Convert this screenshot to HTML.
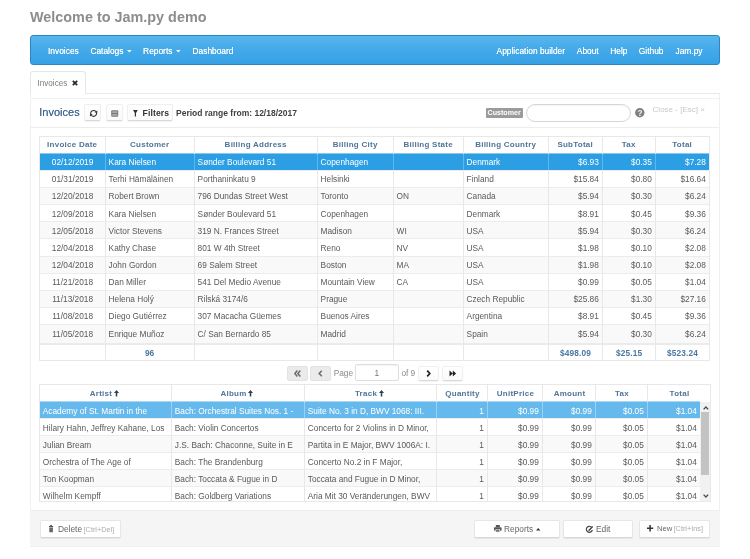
<!DOCTYPE html><html><head><meta charset="utf-8"><style>
html,body{margin:0;padding:0;background:#fff;width:750px;height:559px;overflow:hidden;position:relative;font-family:"Liberation Sans",sans-serif;}
.t{position:absolute;white-space:nowrap;}
.r{position:absolute;box-sizing:border-box;}
svg{position:absolute;overflow:visible;}
#root{position:absolute;left:0;top:0;width:750px;height:559px;filter:blur(0.3px);}
</style></head><body><div id="root">
<div class="t" style="left:30.00px;top:10.21px;font-size:14.4px;line-height:14.4px;color:#8d8d8d;font-weight:bold;">Welcome to Jam.py demo</div>
<div class="r" style="left:30.00px;top:35.00px;width:690.00px;height:30.00px;border:1px solid #2b86c3;border-radius:3px;background:linear-gradient(#58b6ed,#45aaea 45%,#35a1e5);"></div>
<div class="t" style="left:48.00px;top:46.69px;font-size:8.4px;line-height:8.4px;color:#fff;text-shadow:0 0 0.5px rgba(255,255,255,.8);">Invoices</div>
<div class="t" style="left:90.40px;top:46.69px;font-size:8.4px;line-height:8.4px;color:#fff;text-shadow:0 0 0.5px rgba(255,255,255,.8);">Catalogs</div>
<div class="t" style="left:143.10px;top:46.69px;font-size:8.4px;line-height:8.4px;color:#fff;text-shadow:0 0 0.5px rgba(255,255,255,.8);">Reports</div>
<div class="t" style="left:192.50px;top:46.69px;font-size:8.4px;line-height:8.4px;color:#fff;text-shadow:0 0 0.5px rgba(255,255,255,.8);">Dashboard</div>
<div class="t" style="left:496.60px;top:46.69px;font-size:8.4px;line-height:8.4px;color:#fff;text-shadow:0 0 0.5px rgba(255,255,255,.8);">Application builder</div>
<div class="t" style="left:576.80px;top:46.69px;font-size:8.4px;line-height:8.4px;color:#fff;text-shadow:0 0 0.5px rgba(255,255,255,.8);">About</div>
<div class="t" style="left:610.20px;top:46.69px;font-size:8.4px;line-height:8.4px;color:#fff;text-shadow:0 0 0.5px rgba(255,255,255,.8);">Help</div>
<div class="t" style="left:638.80px;top:46.69px;font-size:8.4px;line-height:8.4px;color:#fff;text-shadow:0 0 0.5px rgba(255,255,255,.8);">Github</div>
<div class="t" style="left:675.50px;top:46.69px;font-size:8.4px;line-height:8.4px;color:#fff;text-shadow:0 0 0.5px rgba(255,255,255,.8);">Jam.py</div>
<svg style="left:126.80px;top:49.60px" width="5" height="3" viewBox="0 0 5 3"><path d="M0 0 L4.6 0 L2.3 2.6 Z" fill="#f4f9fd"/></svg>
<svg style="left:176.20px;top:49.60px" width="5" height="3" viewBox="0 0 5 3"><path d="M0 0 L4.6 0 L2.3 2.6 Z" fill="#f4f9fd"/></svg>
<div class="r" style="left:30.00px;top:70.80px;width:56.00px;height:23.70px;border:1px solid #e6e6e6;border-bottom:none;border-radius:3px 3px 0 0;background:#fff;"></div>
<div class="r" style="left:86.00px;top:93.00px;width:634.00px;height:1.00px;background:#e9e9e9;"></div>
<div class="t" style="left:37.40px;top:79.86px;font-size:8.2px;line-height:8.2px;color:#7d7d7d;">Invoices</div>
<svg style="left:71.60px;top:79.80px" width="6" height="6" viewBox="0 0 6 6"><path d="M0.8 0.8 L5.2 5.2 M5.2 0.8 L0.8 5.2" stroke="#262626" stroke-width="1.7"/></svg>
<div class="r" style="left:30.00px;top:94.00px;width:1.00px;height:416.00px;background:#f0f0f0;"></div>
<div class="r" style="left:719.00px;top:94.00px;width:1.00px;height:416.00px;background:#f0f0f0;"></div>
<div class="r" style="left:31.00px;top:98.00px;width:688.00px;height:1.00px;background:#f2f2f2;"></div>
<div class="r" style="left:31.00px;top:127.00px;width:688.00px;height:1.00px;background:#ededed;"></div>
<div class="t" style="left:39.30px;top:107.49px;font-size:11px;line-height:11px;color:#3b6290;text-shadow:0 0 0.4px rgba(59,98,144,.7);">Invoices</div>
<div class="r" style="left:84.40px;top:104.20px;width:17.00px;height:17.20px;border:1px solid #efefef;border-bottom-color:#d9d9d9;border-radius:2px;background:linear-gradient(#fff,#fafafa);box-shadow:0 1px 1px rgba(0,0,0,.05);"></div>
<div class="r" style="left:105.50px;top:104.20px;width:17.00px;height:17.20px;border:1px solid #efefef;border-bottom-color:#d9d9d9;border-radius:2px;background:linear-gradient(#fff,#fafafa);box-shadow:0 1px 1px rgba(0,0,0,.05);"></div>
<div class="r" style="left:126.60px;top:104.20px;width:46.30px;height:17.20px;border:1px solid #efefef;border-bottom-color:#d9d9d9;border-radius:2px;background:linear-gradient(#fff,#fafafa);box-shadow:0 1px 1px rgba(0,0,0,.05);"></div>
<svg style="left:89.50px;top:109.60px" width="8" height="7" viewBox="0 0 8 7"><path d="M0.65 3.9 A3.0 2.9 0 0 1 5.9 1.55" fill="none" stroke="#333" stroke-width="1.1"/><path d="M6.55 2.9 A3.0 2.9 0 0 1 1.3 5.25" fill="none" stroke="#333" stroke-width="1.1"/><path d="M7.4 0.4 L7.2 3.3 L4.6 2.3 Z" fill="#333"/><path d="M-0.1 6.5 L0.1 3.6 L2.7 4.6 Z" fill="#333"/></svg>
<svg style="left:110.90px;top:110.10px" width="8" height="7" viewBox="0 0 8 7"><rect x="0.2" y="0.2" width="7" height="6.6" rx="1.1" fill="#7a7a7a"/><rect x="1.2" y="1.2" width="5" height="1.8" fill="#a9a9a9"/><rect x="1.2" y="4.0" width="5" height="1.8" fill="#a9a9a9"/></svg>
<svg style="left:133.00px;top:109.90px" width="6" height="7" viewBox="0 0 6 7"><path d="M0 0 L4.8 0 L3.0 3.0 L3.0 6.5 L1.8 6.5 L1.8 3.0 Z" fill="#333"/></svg>
<div class="t" style="left:142.60px;top:109.02px;font-size:8.6px;line-height:8.6px;color:#333;font-weight:bold;letter-spacing:0.1px;">Filters</div>
<div class="t" style="left:176.00px;top:108.80px;font-size:8.5px;line-height:8.5px;color:#404040;font-weight:bold;">Period range from: 12/18/2017</div>
<div class="r" style="left:485.80px;top:108.00px;width:37.50px;height:10.00px;background:#9b9b9b;border-radius:1px;"></div>
<div class="t" style="left:487.60px;top:110.49px;font-size:7.1px;line-height:7.1px;color:#fff;font-weight:bold;">Customer</div>
<div class="r" style="left:526.00px;top:104.20px;width:105.30px;height:17.80px;border:1px solid #d6d6d6;border-radius:9px;background:#fff;box-shadow:inset 0 1px 1px rgba(0,0,0,.04);"></div>
<svg style="left:634.60px;top:107.90px" width="10" height="10" viewBox="0 0 10 10"><circle cx="4.8" cy="4.8" r="4.7" fill="#808080"/><text x="4.9" y="7.9" font-family="Liberation Sans" font-weight="bold" font-size="8.2" fill="#f2f2f2" text-anchor="middle">?</text></svg>
<div class="t" style="left:652.60px;top:105.63px;font-size:8.0px;line-height:8.0px;color:#c8c8c8;">Close - [Esc] ×</div>
<div class="r" style="left:39.00px;top:136.00px;width:671.00px;height:225.00px;border:1px solid #e8e8e8;"></div>
<div class="r" style="left:40.00px;top:153.00px;width:669.00px;height:17.00px;background:#2c9fe4;border-top:1px solid #8cc6ea;"></div>
<div class="r" style="left:40.00px;top:188.00px;width:669.00px;height:16.00px;background:#f9f9f9;"></div>
<div class="r" style="left:40.00px;top:222.00px;width:669.00px;height:16.00px;background:#f9f9f9;"></div>
<div class="r" style="left:40.00px;top:257.00px;width:669.00px;height:16.00px;background:#f9f9f9;"></div>
<div class="r" style="left:40.00px;top:291.00px;width:669.00px;height:16.00px;background:#f9f9f9;"></div>
<div class="r" style="left:40.00px;top:325.00px;width:669.00px;height:18.00px;background:#f9f9f9;"></div>
<div class="r" style="left:40.00px;top:170.00px;width:669.00px;height:1.00px;background:#ececec;"></div>
<div class="r" style="left:40.00px;top:187.00px;width:669.00px;height:1.00px;background:#ececec;"></div>
<div class="r" style="left:40.00px;top:204.00px;width:669.00px;height:1.00px;background:#ececec;"></div>
<div class="r" style="left:40.00px;top:221.00px;width:669.00px;height:1.00px;background:#ececec;"></div>
<div class="r" style="left:40.00px;top:238.00px;width:669.00px;height:1.00px;background:#ececec;"></div>
<div class="r" style="left:40.00px;top:256.00px;width:669.00px;height:1.00px;background:#ececec;"></div>
<div class="r" style="left:40.00px;top:273.00px;width:669.00px;height:1.00px;background:#ececec;"></div>
<div class="r" style="left:40.00px;top:290.00px;width:669.00px;height:1.00px;background:#ececec;"></div>
<div class="r" style="left:40.00px;top:307.00px;width:669.00px;height:1.00px;background:#ececec;"></div>
<div class="r" style="left:40.00px;top:324.00px;width:669.00px;height:1.00px;background:#ececec;"></div>
<div class="r" style="left:40.00px;top:343.00px;width:669.00px;height:2.00px;background:#ebebeb;"></div>
<div class="r" style="left:105.00px;top:136.00px;width:1.00px;height:224.00px;background:#e8e8e8;"></div>
<div class="r" style="left:105.00px;top:154.00px;width:1.00px;height:16.00px;background:#5cb9ef;"></div>
<div class="r" style="left:194.00px;top:136.00px;width:1.00px;height:224.00px;background:#e8e8e8;"></div>
<div class="r" style="left:194.00px;top:154.00px;width:1.00px;height:16.00px;background:#5cb9ef;"></div>
<div class="r" style="left:317.00px;top:136.00px;width:1.00px;height:224.00px;background:#e8e8e8;"></div>
<div class="r" style="left:317.00px;top:154.00px;width:1.00px;height:16.00px;background:#5cb9ef;"></div>
<div class="r" style="left:393.00px;top:136.00px;width:1.00px;height:224.00px;background:#e8e8e8;"></div>
<div class="r" style="left:393.00px;top:154.00px;width:1.00px;height:16.00px;background:#5cb9ef;"></div>
<div class="r" style="left:463.00px;top:136.00px;width:1.00px;height:224.00px;background:#e8e8e8;"></div>
<div class="r" style="left:463.00px;top:154.00px;width:1.00px;height:16.00px;background:#5cb9ef;"></div>
<div class="r" style="left:548.00px;top:136.00px;width:1.00px;height:224.00px;background:#e8e8e8;"></div>
<div class="r" style="left:548.00px;top:154.00px;width:1.00px;height:16.00px;background:#5cb9ef;"></div>
<div class="r" style="left:602.00px;top:136.00px;width:1.00px;height:224.00px;background:#e8e8e8;"></div>
<div class="r" style="left:602.00px;top:154.00px;width:1.00px;height:16.00px;background:#5cb9ef;"></div>
<div class="r" style="left:655.00px;top:136.00px;width:1.00px;height:224.00px;background:#e8e8e8;"></div>
<div class="r" style="left:655.00px;top:154.00px;width:1.00px;height:16.00px;background:#5cb9ef;"></div>
<div class="t" style="left:39.20px;top:141.43px;font-size:8.0px;line-height:8.0px;color:#4f7599;font-weight:bold;width:66.00px;text-align:center;letter-spacing:0.25px;">Invoice Date</div>
<div class="t" style="left:105.20px;top:141.43px;font-size:8.0px;line-height:8.0px;color:#4f7599;font-weight:bold;width:89.00px;text-align:center;letter-spacing:0.25px;">Customer</div>
<div class="t" style="left:194.20px;top:141.43px;font-size:8.0px;line-height:8.0px;color:#4f7599;font-weight:bold;width:123.00px;text-align:center;letter-spacing:0.25px;">Billing Address</div>
<div class="t" style="left:317.20px;top:141.43px;font-size:8.0px;line-height:8.0px;color:#4f7599;font-weight:bold;width:76.00px;text-align:center;letter-spacing:0.25px;">Billing City</div>
<div class="t" style="left:393.20px;top:141.43px;font-size:8.0px;line-height:8.0px;color:#4f7599;font-weight:bold;width:70.00px;text-align:center;letter-spacing:0.25px;">Billing State</div>
<div class="t" style="left:463.20px;top:141.43px;font-size:8.0px;line-height:8.0px;color:#4f7599;font-weight:bold;width:85.00px;text-align:center;letter-spacing:0.25px;">Billing Country</div>
<div class="t" style="left:548.20px;top:141.43px;font-size:8.0px;line-height:8.0px;color:#4f7599;font-weight:bold;width:54.00px;text-align:center;letter-spacing:0.25px;">SubTotal</div>
<div class="t" style="left:602.20px;top:141.43px;font-size:8.0px;line-height:8.0px;color:#4f7599;font-weight:bold;width:53.00px;text-align:center;letter-spacing:0.25px;">Tax</div>
<div class="t" style="left:655.20px;top:141.43px;font-size:8.0px;line-height:8.0px;color:#4f7599;font-weight:bold;width:54.00px;text-align:center;letter-spacing:0.25px;">Total</div>
<div class="t" style="left:39.60px;top:158.07px;font-size:8.3px;line-height:8.3px;color:#fff;width:66.00px;text-align:center;">02/12/2019</div>
<div class="t" style="left:108.60px;top:158.07px;font-size:8.3px;line-height:8.3px;color:#fff;">Kara Nielsen</div>
<div class="t" style="left:197.60px;top:158.07px;font-size:8.3px;line-height:8.3px;color:#fff;">Sønder Boulevard 51</div>
<div class="t" style="left:320.60px;top:158.07px;font-size:8.3px;line-height:8.3px;color:#fff;">Copenhagen</div>
<div class="t" style="left:466.60px;top:158.07px;font-size:8.3px;line-height:8.3px;color:#fff;">Denmark</div>
<div class="t" style="left:548.00px;top:158.07px;font-size:8.3px;line-height:8.3px;color:#fff;width:50.80px;text-align:right;">$6.93</div>
<div class="t" style="left:602.00px;top:158.07px;font-size:8.3px;line-height:8.3px;color:#fff;width:49.80px;text-align:right;">$0.35</div>
<div class="t" style="left:655.00px;top:158.07px;font-size:8.3px;line-height:8.3px;color:#fff;width:50.80px;text-align:right;">$7.28</div>
<div class="t" style="left:39.60px;top:175.22px;font-size:8.3px;line-height:8.3px;color:#595959;width:66.00px;text-align:center;">01/31/2019</div>
<div class="t" style="left:108.60px;top:175.22px;font-size:8.3px;line-height:8.3px;color:#595959;">Terhi Hämäläinen</div>
<div class="t" style="left:197.60px;top:175.22px;font-size:8.3px;line-height:8.3px;color:#595959;">Porthaninkatu 9</div>
<div class="t" style="left:320.60px;top:175.22px;font-size:8.3px;line-height:8.3px;color:#595959;">Helsinki</div>
<div class="t" style="left:466.60px;top:175.22px;font-size:8.3px;line-height:8.3px;color:#595959;">Finland</div>
<div class="t" style="left:548.00px;top:175.22px;font-size:8.3px;line-height:8.3px;color:#595959;width:50.80px;text-align:right;">$15.84</div>
<div class="t" style="left:602.00px;top:175.22px;font-size:8.3px;line-height:8.3px;color:#595959;width:49.80px;text-align:right;">$0.80</div>
<div class="t" style="left:655.00px;top:175.22px;font-size:8.3px;line-height:8.3px;color:#595959;width:50.80px;text-align:right;">$16.64</div>
<div class="t" style="left:39.60px;top:192.37px;font-size:8.3px;line-height:8.3px;color:#595959;width:66.00px;text-align:center;">12/20/2018</div>
<div class="t" style="left:108.60px;top:192.37px;font-size:8.3px;line-height:8.3px;color:#595959;">Robert Brown</div>
<div class="t" style="left:197.60px;top:192.37px;font-size:8.3px;line-height:8.3px;color:#595959;">796 Dundas Street West</div>
<div class="t" style="left:320.60px;top:192.37px;font-size:8.3px;line-height:8.3px;color:#595959;">Toronto</div>
<div class="t" style="left:396.60px;top:192.37px;font-size:8.3px;line-height:8.3px;color:#595959;">ON</div>
<div class="t" style="left:466.60px;top:192.37px;font-size:8.3px;line-height:8.3px;color:#595959;">Canada</div>
<div class="t" style="left:548.00px;top:192.37px;font-size:8.3px;line-height:8.3px;color:#595959;width:50.80px;text-align:right;">$5.94</div>
<div class="t" style="left:602.00px;top:192.37px;font-size:8.3px;line-height:8.3px;color:#595959;width:49.80px;text-align:right;">$0.30</div>
<div class="t" style="left:655.00px;top:192.37px;font-size:8.3px;line-height:8.3px;color:#595959;width:50.80px;text-align:right;">$6.24</div>
<div class="t" style="left:39.60px;top:209.52px;font-size:8.3px;line-height:8.3px;color:#595959;width:66.00px;text-align:center;">12/09/2018</div>
<div class="t" style="left:108.60px;top:209.52px;font-size:8.3px;line-height:8.3px;color:#595959;">Kara Nielsen</div>
<div class="t" style="left:197.60px;top:209.52px;font-size:8.3px;line-height:8.3px;color:#595959;">Sønder Boulevard 51</div>
<div class="t" style="left:320.60px;top:209.52px;font-size:8.3px;line-height:8.3px;color:#595959;">Copenhagen</div>
<div class="t" style="left:466.60px;top:209.52px;font-size:8.3px;line-height:8.3px;color:#595959;">Denmark</div>
<div class="t" style="left:548.00px;top:209.52px;font-size:8.3px;line-height:8.3px;color:#595959;width:50.80px;text-align:right;">$8.91</div>
<div class="t" style="left:602.00px;top:209.52px;font-size:8.3px;line-height:8.3px;color:#595959;width:49.80px;text-align:right;">$0.45</div>
<div class="t" style="left:655.00px;top:209.52px;font-size:8.3px;line-height:8.3px;color:#595959;width:50.80px;text-align:right;">$9.36</div>
<div class="t" style="left:39.60px;top:226.67px;font-size:8.3px;line-height:8.3px;color:#595959;width:66.00px;text-align:center;">12/05/2018</div>
<div class="t" style="left:108.60px;top:226.67px;font-size:8.3px;line-height:8.3px;color:#595959;">Victor Stevens</div>
<div class="t" style="left:197.60px;top:226.67px;font-size:8.3px;line-height:8.3px;color:#595959;">319 N. Frances Street</div>
<div class="t" style="left:320.60px;top:226.67px;font-size:8.3px;line-height:8.3px;color:#595959;">Madison</div>
<div class="t" style="left:396.60px;top:226.67px;font-size:8.3px;line-height:8.3px;color:#595959;">WI</div>
<div class="t" style="left:466.60px;top:226.67px;font-size:8.3px;line-height:8.3px;color:#595959;">USA</div>
<div class="t" style="left:548.00px;top:226.67px;font-size:8.3px;line-height:8.3px;color:#595959;width:50.80px;text-align:right;">$5.94</div>
<div class="t" style="left:602.00px;top:226.67px;font-size:8.3px;line-height:8.3px;color:#595959;width:49.80px;text-align:right;">$0.30</div>
<div class="t" style="left:655.00px;top:226.67px;font-size:8.3px;line-height:8.3px;color:#595959;width:50.80px;text-align:right;">$6.24</div>
<div class="t" style="left:39.60px;top:243.82px;font-size:8.3px;line-height:8.3px;color:#595959;width:66.00px;text-align:center;">12/04/2018</div>
<div class="t" style="left:108.60px;top:243.82px;font-size:8.3px;line-height:8.3px;color:#595959;">Kathy Chase</div>
<div class="t" style="left:197.60px;top:243.82px;font-size:8.3px;line-height:8.3px;color:#595959;">801 W 4th Street</div>
<div class="t" style="left:320.60px;top:243.82px;font-size:8.3px;line-height:8.3px;color:#595959;">Reno</div>
<div class="t" style="left:396.60px;top:243.82px;font-size:8.3px;line-height:8.3px;color:#595959;">NV</div>
<div class="t" style="left:466.60px;top:243.82px;font-size:8.3px;line-height:8.3px;color:#595959;">USA</div>
<div class="t" style="left:548.00px;top:243.82px;font-size:8.3px;line-height:8.3px;color:#595959;width:50.80px;text-align:right;">$1.98</div>
<div class="t" style="left:602.00px;top:243.82px;font-size:8.3px;line-height:8.3px;color:#595959;width:49.80px;text-align:right;">$0.10</div>
<div class="t" style="left:655.00px;top:243.82px;font-size:8.3px;line-height:8.3px;color:#595959;width:50.80px;text-align:right;">$2.08</div>
<div class="t" style="left:39.60px;top:260.97px;font-size:8.3px;line-height:8.3px;color:#595959;width:66.00px;text-align:center;">12/04/2018</div>
<div class="t" style="left:108.60px;top:260.97px;font-size:8.3px;line-height:8.3px;color:#595959;">John Gordon</div>
<div class="t" style="left:197.60px;top:260.97px;font-size:8.3px;line-height:8.3px;color:#595959;">69 Salem Street</div>
<div class="t" style="left:320.60px;top:260.97px;font-size:8.3px;line-height:8.3px;color:#595959;">Boston</div>
<div class="t" style="left:396.60px;top:260.97px;font-size:8.3px;line-height:8.3px;color:#595959;">MA</div>
<div class="t" style="left:466.60px;top:260.97px;font-size:8.3px;line-height:8.3px;color:#595959;">USA</div>
<div class="t" style="left:548.00px;top:260.97px;font-size:8.3px;line-height:8.3px;color:#595959;width:50.80px;text-align:right;">$1.98</div>
<div class="t" style="left:602.00px;top:260.97px;font-size:8.3px;line-height:8.3px;color:#595959;width:49.80px;text-align:right;">$0.10</div>
<div class="t" style="left:655.00px;top:260.97px;font-size:8.3px;line-height:8.3px;color:#595959;width:50.80px;text-align:right;">$2.08</div>
<div class="t" style="left:39.60px;top:278.12px;font-size:8.3px;line-height:8.3px;color:#595959;width:66.00px;text-align:center;">11/21/2018</div>
<div class="t" style="left:108.60px;top:278.12px;font-size:8.3px;line-height:8.3px;color:#595959;">Dan Miller</div>
<div class="t" style="left:197.60px;top:278.12px;font-size:8.3px;line-height:8.3px;color:#595959;">541 Del Medio Avenue</div>
<div class="t" style="left:320.60px;top:278.12px;font-size:8.3px;line-height:8.3px;color:#595959;">Mountain View</div>
<div class="t" style="left:396.60px;top:278.12px;font-size:8.3px;line-height:8.3px;color:#595959;">CA</div>
<div class="t" style="left:466.60px;top:278.12px;font-size:8.3px;line-height:8.3px;color:#595959;">USA</div>
<div class="t" style="left:548.00px;top:278.12px;font-size:8.3px;line-height:8.3px;color:#595959;width:50.80px;text-align:right;">$0.99</div>
<div class="t" style="left:602.00px;top:278.12px;font-size:8.3px;line-height:8.3px;color:#595959;width:49.80px;text-align:right;">$0.05</div>
<div class="t" style="left:655.00px;top:278.12px;font-size:8.3px;line-height:8.3px;color:#595959;width:50.80px;text-align:right;">$1.04</div>
<div class="t" style="left:39.60px;top:295.27px;font-size:8.3px;line-height:8.3px;color:#595959;width:66.00px;text-align:center;">11/13/2018</div>
<div class="t" style="left:108.60px;top:295.27px;font-size:8.3px;line-height:8.3px;color:#595959;">Helena Holý</div>
<div class="t" style="left:197.60px;top:295.27px;font-size:8.3px;line-height:8.3px;color:#595959;">Rilská 3174/6</div>
<div class="t" style="left:320.60px;top:295.27px;font-size:8.3px;line-height:8.3px;color:#595959;">Prague</div>
<div class="t" style="left:466.60px;top:295.27px;font-size:8.3px;line-height:8.3px;color:#595959;">Czech Republic</div>
<div class="t" style="left:548.00px;top:295.27px;font-size:8.3px;line-height:8.3px;color:#595959;width:50.80px;text-align:right;">$25.86</div>
<div class="t" style="left:602.00px;top:295.27px;font-size:8.3px;line-height:8.3px;color:#595959;width:49.80px;text-align:right;">$1.30</div>
<div class="t" style="left:655.00px;top:295.27px;font-size:8.3px;line-height:8.3px;color:#595959;width:50.80px;text-align:right;">$27.16</div>
<div class="t" style="left:39.60px;top:312.42px;font-size:8.3px;line-height:8.3px;color:#595959;width:66.00px;text-align:center;">11/08/2018</div>
<div class="t" style="left:108.60px;top:312.42px;font-size:8.3px;line-height:8.3px;color:#595959;">Diego Gutiérrez</div>
<div class="t" style="left:197.60px;top:312.42px;font-size:8.3px;line-height:8.3px;color:#595959;">307 Macacha Güemes</div>
<div class="t" style="left:320.60px;top:312.42px;font-size:8.3px;line-height:8.3px;color:#595959;">Buenos Aires</div>
<div class="t" style="left:466.60px;top:312.42px;font-size:8.3px;line-height:8.3px;color:#595959;">Argentina</div>
<div class="t" style="left:548.00px;top:312.42px;font-size:8.3px;line-height:8.3px;color:#595959;width:50.80px;text-align:right;">$8.91</div>
<div class="t" style="left:602.00px;top:312.42px;font-size:8.3px;line-height:8.3px;color:#595959;width:49.80px;text-align:right;">$0.45</div>
<div class="t" style="left:655.00px;top:312.42px;font-size:8.3px;line-height:8.3px;color:#595959;width:50.80px;text-align:right;">$9.36</div>
<div class="t" style="left:39.60px;top:329.57px;font-size:8.3px;line-height:8.3px;color:#595959;width:66.00px;text-align:center;">11/05/2018</div>
<div class="t" style="left:108.60px;top:329.57px;font-size:8.3px;line-height:8.3px;color:#595959;">Enrique Muñoz</div>
<div class="t" style="left:197.60px;top:329.57px;font-size:8.3px;line-height:8.3px;color:#595959;">C/ San Bernardo 85</div>
<div class="t" style="left:320.60px;top:329.57px;font-size:8.3px;line-height:8.3px;color:#595959;">Madrid</div>
<div class="t" style="left:466.60px;top:329.57px;font-size:8.3px;line-height:8.3px;color:#595959;">Spain</div>
<div class="t" style="left:548.00px;top:329.57px;font-size:8.3px;line-height:8.3px;color:#595959;width:50.80px;text-align:right;">$5.94</div>
<div class="t" style="left:602.00px;top:329.57px;font-size:8.3px;line-height:8.3px;color:#595959;width:49.80px;text-align:right;">$0.30</div>
<div class="t" style="left:655.00px;top:329.57px;font-size:8.3px;line-height:8.3px;color:#595959;width:50.80px;text-align:right;">$6.24</div>
<div class="t" style="left:105.00px;top:349.17px;font-size:8.3px;line-height:8.3px;color:#4a77a2;font-weight:bold;width:89.00px;text-align:center;">96</div>
<div class="t" style="left:548.60px;top:349.17px;font-size:8.3px;line-height:8.3px;color:#4a77a2;font-weight:bold;width:54.00px;text-align:center;letter-spacing:0.15px;">$498.09</div>
<div class="t" style="left:602.60px;top:349.17px;font-size:8.3px;line-height:8.3px;color:#4a77a2;font-weight:bold;width:53.00px;text-align:center;letter-spacing:0.15px;">$25.15</div>
<div class="t" style="left:655.60px;top:349.17px;font-size:8.3px;line-height:8.3px;color:#4a77a2;font-weight:bold;width:54.00px;text-align:center;letter-spacing:0.15px;">$523.24</div>
<div class="r" style="left:287.00px;top:366.00px;width:20.60px;height:14.60px;background:#ebebeb;border:1px solid #e3e3e3;border-radius:2px;"></div>
<div class="r" style="left:310.30px;top:366.00px;width:21.00px;height:14.60px;background:#ebebeb;border:1px solid #e3e3e3;border-radius:2px;"></div>
<svg style="left:294.40px;top:369.60px" width="7" height="7" viewBox="0 0 7 7"><path d="M3.3 0.6 L0.9 3.5 L3.3 6.4 M6.3 0.6 L3.9 3.5 L6.3 6.4" fill="none" stroke="#707070" stroke-width="1.6"/></svg>
<svg style="left:318.30px;top:369.60px" width="5" height="7" viewBox="0 0 5 7"><path d="M3.8 0.7 L1.2 3.5 L3.8 6.3" fill="none" stroke="#707070" stroke-width="1.6"/></svg>
<div class="t" style="left:333.70px;top:368.57px;font-size:8.3px;line-height:8.3px;color:#8a8a8a;">Page</div>
<div class="r" style="left:355.00px;top:364.40px;width:43.80px;height:17.00px;border:1px solid #dedede;border-radius:2px;background:#fff;box-shadow:inset 0 1px 1px rgba(0,0,0,.05);"></div>
<div class="t" style="left:355.00px;top:368.87px;font-size:8.3px;line-height:8.3px;color:#777;width:43.80px;text-align:center;">1</div>
<div class="t" style="left:401.40px;top:368.57px;font-size:8.3px;line-height:8.3px;color:#8a8a8a;">of 9</div>
<div class="r" style="left:417.90px;top:366.00px;width:21.50px;height:14.50px;border:1px solid #efefef;border-bottom-color:#d9d9d9;border-radius:2px;background:linear-gradient(#fff,#fafafa);box-shadow:0 1px 1px rgba(0,0,0,.05);"></div>
<div class="r" style="left:442.10px;top:366.00px;width:20.60px;height:14.50px;border:1px solid #efefef;border-bottom-color:#d9d9d9;border-radius:2px;background:linear-gradient(#fff,#fafafa);box-shadow:0 1px 1px rgba(0,0,0,.05);"></div>
<svg style="left:426.30px;top:369.60px" width="5" height="7" viewBox="0 0 5 7"><path d="M1.2 0.7 L3.8 3.5 L1.2 6.3" fill="none" stroke="#222" stroke-width="1.7"/></svg>
<svg style="left:449.00px;top:369.60px" width="8" height="7" viewBox="0 0 8 7"><path d="M0.5 0.5 L3.8 3.5 L0.5 6.5 Z M3.8 0.5 L7.1 3.5 L3.8 6.5 Z" fill="#222"/></svg>
<div class="r" style="left:39.00px;top:384.00px;width:672.00px;height:118.00px;border:1px solid #e8e8e8;"></div>
<div class="r" style="left:40.00px;top:401.00px;width:660.00px;height:17.00px;background:#66b9ec;border-top:1px solid #a9d6f2;"></div>
<div class="r" style="left:40.00px;top:436.00px;width:660.00px;height:16.00px;background:#f9f9f9;"></div>
<div class="r" style="left:40.00px;top:470.00px;width:660.00px;height:16.00px;background:#f9f9f9;"></div>
<div class="r" style="left:40.00px;top:418.00px;width:660.00px;height:1.00px;background:#ececec;"></div>
<div class="r" style="left:40.00px;top:435.00px;width:660.00px;height:1.00px;background:#ececec;"></div>
<div class="r" style="left:40.00px;top:452.00px;width:660.00px;height:1.00px;background:#ececec;"></div>
<div class="r" style="left:40.00px;top:469.00px;width:660.00px;height:1.00px;background:#ececec;"></div>
<div class="r" style="left:40.00px;top:486.00px;width:660.00px;height:1.00px;background:#ececec;"></div>
<div class="r" style="left:171.00px;top:384.00px;width:1.00px;height:117.00px;background:#e8e8e8;"></div>
<div class="r" style="left:171.00px;top:402.00px;width:1.00px;height:16.00px;background:#98d1f3;"></div>
<div class="r" style="left:304.00px;top:384.00px;width:1.00px;height:117.00px;background:#e8e8e8;"></div>
<div class="r" style="left:304.00px;top:402.00px;width:1.00px;height:16.00px;background:#98d1f3;"></div>
<div class="r" style="left:436.00px;top:384.00px;width:1.00px;height:117.00px;background:#e8e8e8;"></div>
<div class="r" style="left:436.00px;top:402.00px;width:1.00px;height:16.00px;background:#98d1f3;"></div>
<div class="r" style="left:487.00px;top:384.00px;width:1.00px;height:117.00px;background:#e8e8e8;"></div>
<div class="r" style="left:487.00px;top:402.00px;width:1.00px;height:16.00px;background:#98d1f3;"></div>
<div class="r" style="left:542.00px;top:384.00px;width:1.00px;height:117.00px;background:#e8e8e8;"></div>
<div class="r" style="left:542.00px;top:402.00px;width:1.00px;height:16.00px;background:#98d1f3;"></div>
<div class="r" style="left:595.00px;top:384.00px;width:1.00px;height:117.00px;background:#e8e8e8;"></div>
<div class="r" style="left:595.00px;top:402.00px;width:1.00px;height:16.00px;background:#98d1f3;"></div>
<div class="r" style="left:647.00px;top:384.00px;width:1.00px;height:117.00px;background:#e8e8e8;"></div>
<div class="r" style="left:647.00px;top:402.00px;width:1.00px;height:16.00px;background:#98d1f3;"></div>
<div class="r" style="left:700.00px;top:402.00px;width:10.00px;height:99.00px;background:#f1f1f1;"></div>
<div class="r" style="left:701.00px;top:412.00px;width:8.00px;height:63.00px;background:#c3c3c3;"></div>
<svg style="left:702.60px;top:405.50px" width="6" height="4" viewBox="0 0 6 4"><path d="M0.6 3.4 L2.9 1 L5.2 3.4" fill="none" stroke="#4a4a4a" stroke-width="1.3"/></svg>
<svg style="left:702.60px;top:494.20px" width="6" height="4" viewBox="0 0 6 4"><path d="M0.6 0.6 L2.9 3 L5.2 0.6" fill="none" stroke="#4a4a4a" stroke-width="1.3"/></svg>
<div class="t" style="left:38.30px;top:390.03px;font-size:8.0px;line-height:8.0px;color:#4f7599;font-weight:bold;width:132.00px;text-align:center;letter-spacing:0.25px;">Artist<svg style="position:relative;display:inline-block;width:5px;height:7px;vertical-align:-0.6px;margin-left:1.6px" viewBox="0 0 5 7"><path d="M2.5 0 L5 2.9 L3.25 2.9 L3.25 6.6 L1.75 6.6 L1.75 2.9 L0 2.9 Z" fill="#2b3f55"/></svg></div>
<div class="t" style="left:170.30px;top:390.03px;font-size:8.0px;line-height:8.0px;color:#4f7599;font-weight:bold;width:133.00px;text-align:center;letter-spacing:0.25px;">Album<svg style="position:relative;display:inline-block;width:5px;height:7px;vertical-align:-0.6px;margin-left:1.6px" viewBox="0 0 5 7"><path d="M2.5 0 L5 2.9 L3.25 2.9 L3.25 6.6 L1.75 6.6 L1.75 2.9 L0 2.9 Z" fill="#2b3f55"/></svg></div>
<div class="t" style="left:303.30px;top:390.03px;font-size:8.0px;line-height:8.0px;color:#4f7599;font-weight:bold;width:132.00px;text-align:center;letter-spacing:0.25px;">Track<svg style="position:relative;display:inline-block;width:5px;height:7px;vertical-align:-0.6px;margin-left:1.6px" viewBox="0 0 5 7"><path d="M2.5 0 L5 2.9 L3.25 2.9 L3.25 6.6 L1.75 6.6 L1.75 2.9 L0 2.9 Z" fill="#2b3f55"/></svg></div>
<div class="t" style="left:437.00px;top:390.03px;font-size:8.0px;line-height:8.0px;color:#4f7599;font-weight:bold;width:51.00px;text-align:center;letter-spacing:0.25px;">Quantity</div>
<div class="t" style="left:488.00px;top:390.03px;font-size:8.0px;line-height:8.0px;color:#4f7599;font-weight:bold;width:55.00px;text-align:center;letter-spacing:0.25px;">UnitPrice</div>
<div class="t" style="left:543.00px;top:390.03px;font-size:8.0px;line-height:8.0px;color:#4f7599;font-weight:bold;width:53.00px;text-align:center;letter-spacing:0.25px;">Amount</div>
<div class="t" style="left:596.00px;top:390.03px;font-size:8.0px;line-height:8.0px;color:#4f7599;font-weight:bold;width:52.00px;text-align:center;letter-spacing:0.25px;">Tax</div>
<div class="t" style="left:648.00px;top:390.03px;font-size:8.0px;line-height:8.0px;color:#4f7599;font-weight:bold;width:63.00px;text-align:center;letter-spacing:0.25px;">Total</div>
<div class="t" style="left:42.80px;top:406.67px;font-size:8.3px;line-height:8.3px;color:#fff;">Academy of St. Martin in the</div>
<div class="t" style="left:174.80px;top:406.67px;font-size:8.3px;line-height:8.3px;color:#fff;">Bach: Orchestral Suites Nos. 1 -</div>
<div class="t" style="left:307.80px;top:406.67px;font-size:8.3px;line-height:8.3px;color:#fff;">Suite No. 3 in D, BWV 1068: III.</div>
<div class="t" style="left:436.00px;top:406.67px;font-size:8.3px;line-height:8.3px;color:#fff;width:47.80px;text-align:right;">1</div>
<div class="t" style="left:487.00px;top:406.67px;font-size:8.3px;line-height:8.3px;color:#fff;width:51.80px;text-align:right;">$0.99</div>
<div class="t" style="left:542.00px;top:406.67px;font-size:8.3px;line-height:8.3px;color:#fff;width:49.80px;text-align:right;">$0.99</div>
<div class="t" style="left:595.00px;top:406.67px;font-size:8.3px;line-height:8.3px;color:#fff;width:48.80px;text-align:right;">$0.05</div>
<div class="t" style="left:647.00px;top:406.67px;font-size:8.3px;line-height:8.3px;color:#fff;width:49.80px;text-align:right;">$1.04</div>
<div class="t" style="left:42.80px;top:423.77px;font-size:8.3px;line-height:8.3px;color:#595959;">Hilary Hahn, Jeffrey Kahane, Los</div>
<div class="t" style="left:174.80px;top:423.77px;font-size:8.3px;line-height:8.3px;color:#595959;">Bach: Violin Concertos</div>
<div class="t" style="left:307.80px;top:423.77px;font-size:8.3px;line-height:8.3px;color:#595959;">Concerto for 2 Violins in D Minor,</div>
<div class="t" style="left:436.00px;top:423.77px;font-size:8.3px;line-height:8.3px;color:#595959;width:47.80px;text-align:right;">1</div>
<div class="t" style="left:487.00px;top:423.77px;font-size:8.3px;line-height:8.3px;color:#595959;width:51.80px;text-align:right;">$0.99</div>
<div class="t" style="left:542.00px;top:423.77px;font-size:8.3px;line-height:8.3px;color:#595959;width:49.80px;text-align:right;">$0.99</div>
<div class="t" style="left:595.00px;top:423.77px;font-size:8.3px;line-height:8.3px;color:#595959;width:48.80px;text-align:right;">$0.05</div>
<div class="t" style="left:647.00px;top:423.77px;font-size:8.3px;line-height:8.3px;color:#595959;width:49.80px;text-align:right;">$1.04</div>
<div class="t" style="left:42.80px;top:440.87px;font-size:8.3px;line-height:8.3px;color:#595959;">Julian Bream</div>
<div class="t" style="left:174.80px;top:440.87px;font-size:8.3px;line-height:8.3px;color:#595959;">J.S. Bach: Chaconne, Suite in E</div>
<div class="t" style="left:307.80px;top:440.87px;font-size:8.3px;line-height:8.3px;color:#595959;">Partita in E Major, BWV 1006A: I.</div>
<div class="t" style="left:436.00px;top:440.87px;font-size:8.3px;line-height:8.3px;color:#595959;width:47.80px;text-align:right;">1</div>
<div class="t" style="left:487.00px;top:440.87px;font-size:8.3px;line-height:8.3px;color:#595959;width:51.80px;text-align:right;">$0.99</div>
<div class="t" style="left:542.00px;top:440.87px;font-size:8.3px;line-height:8.3px;color:#595959;width:49.80px;text-align:right;">$0.99</div>
<div class="t" style="left:595.00px;top:440.87px;font-size:8.3px;line-height:8.3px;color:#595959;width:48.80px;text-align:right;">$0.05</div>
<div class="t" style="left:647.00px;top:440.87px;font-size:8.3px;line-height:8.3px;color:#595959;width:49.80px;text-align:right;">$1.04</div>
<div class="t" style="left:42.80px;top:457.97px;font-size:8.3px;line-height:8.3px;color:#595959;">Orchestra of The Age of</div>
<div class="t" style="left:174.80px;top:457.97px;font-size:8.3px;line-height:8.3px;color:#595959;">Bach: The Brandenburg</div>
<div class="t" style="left:307.80px;top:457.97px;font-size:8.3px;line-height:8.3px;color:#595959;">Concerto No.2 in F Major,</div>
<div class="t" style="left:436.00px;top:457.97px;font-size:8.3px;line-height:8.3px;color:#595959;width:47.80px;text-align:right;">1</div>
<div class="t" style="left:487.00px;top:457.97px;font-size:8.3px;line-height:8.3px;color:#595959;width:51.80px;text-align:right;">$0.99</div>
<div class="t" style="left:542.00px;top:457.97px;font-size:8.3px;line-height:8.3px;color:#595959;width:49.80px;text-align:right;">$0.99</div>
<div class="t" style="left:595.00px;top:457.97px;font-size:8.3px;line-height:8.3px;color:#595959;width:48.80px;text-align:right;">$0.05</div>
<div class="t" style="left:647.00px;top:457.97px;font-size:8.3px;line-height:8.3px;color:#595959;width:49.80px;text-align:right;">$1.04</div>
<div class="t" style="left:42.80px;top:475.07px;font-size:8.3px;line-height:8.3px;color:#595959;">Ton Koopman</div>
<div class="t" style="left:174.80px;top:475.07px;font-size:8.3px;line-height:8.3px;color:#595959;">Bach: Toccata &amp; Fugue in D</div>
<div class="t" style="left:307.80px;top:475.07px;font-size:8.3px;line-height:8.3px;color:#595959;">Toccata and Fugue in D Minor,</div>
<div class="t" style="left:436.00px;top:475.07px;font-size:8.3px;line-height:8.3px;color:#595959;width:47.80px;text-align:right;">1</div>
<div class="t" style="left:487.00px;top:475.07px;font-size:8.3px;line-height:8.3px;color:#595959;width:51.80px;text-align:right;">$0.99</div>
<div class="t" style="left:542.00px;top:475.07px;font-size:8.3px;line-height:8.3px;color:#595959;width:49.80px;text-align:right;">$0.99</div>
<div class="t" style="left:595.00px;top:475.07px;font-size:8.3px;line-height:8.3px;color:#595959;width:48.80px;text-align:right;">$0.05</div>
<div class="t" style="left:647.00px;top:475.07px;font-size:8.3px;line-height:8.3px;color:#595959;width:49.80px;text-align:right;">$1.04</div>
<div class="t" style="left:42.80px;top:492.17px;font-size:8.3px;line-height:8.3px;color:#595959;">Wilhelm Kempff</div>
<div class="t" style="left:174.80px;top:492.17px;font-size:8.3px;line-height:8.3px;color:#595959;">Bach: Goldberg Variations</div>
<div class="t" style="left:307.80px;top:492.17px;font-size:8.3px;line-height:8.3px;color:#595959;">Aria Mit 30 Veränderungen, BWV</div>
<div class="t" style="left:436.00px;top:492.17px;font-size:8.3px;line-height:8.3px;color:#595959;width:47.80px;text-align:right;">1</div>
<div class="t" style="left:487.00px;top:492.17px;font-size:8.3px;line-height:8.3px;color:#595959;width:51.80px;text-align:right;">$0.99</div>
<div class="t" style="left:542.00px;top:492.17px;font-size:8.3px;line-height:8.3px;color:#595959;width:49.80px;text-align:right;">$0.99</div>
<div class="t" style="left:595.00px;top:492.17px;font-size:8.3px;line-height:8.3px;color:#595959;width:48.80px;text-align:right;">$0.05</div>
<div class="t" style="left:647.00px;top:492.17px;font-size:8.3px;line-height:8.3px;color:#595959;width:49.80px;text-align:right;">$1.04</div>
<div class="r" style="left:30.00px;top:510.00px;width:690.00px;height:37.00px;background:#f5f5f5;border-top:1px solid #eeeeee;border-bottom:1px solid #f0f0f0;"></div>
<div class="r" style="left:39.80px;top:520.20px;width:80.80px;height:17.60px;border:1px solid #e6e6e6;border-bottom-color:#d6d6d6;border-radius:2px;background:#fff;box-shadow:0 1px 1px rgba(0,0,0,.06);"></div>
<div class="r" style="left:474.30px;top:520.20px;width:85.60px;height:17.60px;border:1px solid #e6e6e6;border-bottom-color:#d6d6d6;border-radius:2px;background:#fff;box-shadow:0 1px 1px rgba(0,0,0,.06);"></div>
<div class="r" style="left:563.20px;top:520.20px;width:69.40px;height:17.60px;border:1px solid #e6e6e6;border-bottom-color:#d6d6d6;border-radius:2px;background:#fff;box-shadow:0 1px 1px rgba(0,0,0,.06);"></div>
<div class="r" style="left:639.00px;top:520.20px;width:71.00px;height:17.60px;border:1px solid #e6e6e6;border-bottom-color:#d6d6d6;border-radius:2px;background:#fff;box-shadow:0 1px 1px rgba(0,0,0,.06);"></div>
<svg style="left:48.50px;top:524.80px" width="5" height="8" viewBox="0 0 5 8"><rect x="0" y="1" width="4.2" height="1.1" fill="#555"/><rect x="1.2" y="0" width="1.8" height="1.2" fill="#555"/><rect x="0.3" y="2.4" width="3.6" height="4.9" rx="0.4" fill="#666"/></svg>
<div class="t" style="left:57.90px;top:524.79px;font-size:8.4px;line-height:8.4px;color:#666;">Delete</div>
<div class="t" style="left:83.60px;top:525.72px;font-size:7.3px;line-height:7.3px;color:#acacac;">[Ctrl+Del]</div>
<svg style="left:493.80px;top:525.00px" width="8" height="8" viewBox="0 0 8 8"><rect x="1.8" y="0" width="4" height="2.2" fill="#555"/><rect x="0" y="2.3" width="7.6" height="3.4" rx="0.6" fill="#555"/><rect x="1.8" y="4.7" width="4" height="2.4" fill="#777" stroke="#fff" stroke-width="0.5"/></svg>
<div class="t" style="left:504.10px;top:524.57px;font-size:8.3px;line-height:8.3px;color:#666;">Reports</div>
<svg style="left:536.20px;top:527.80px" width="5" height="3" viewBox="0 0 5 3"><path d="M0 2.6 L4.4 2.6 L2.2 0 Z" fill="#333"/></svg>
<svg style="left:585.70px;top:525.60px" width="8" height="7" viewBox="0 0 8 7"><path d="M5.3 1.0 A3 3 0 1 0 6.3 3.8" fill="none" stroke="#444" stroke-width="1.2"/><path d="M2.6 4.7 L6.7 0.6" stroke="#444" stroke-width="1.4"/></svg>
<div class="t" style="left:595.90px;top:524.79px;font-size:8.4px;line-height:8.4px;color:#666;">Edit</div>
<svg style="left:646.60px;top:525.00px" width="7" height="7" viewBox="0 0 7 7"><path d="M3.1 0 V6.4 M0 3.2 H6.2" stroke="#333" stroke-width="1.5"/></svg>
<div class="t" style="left:657.10px;top:525.17px;font-size:7.6px;line-height:7.6px;color:#666;">New</div>
<div class="t" style="left:673.60px;top:525.12px;font-size:7.3px;line-height:7.3px;color:#acacac;">[Ctrl+Ins]</div>
</div></body></html>
